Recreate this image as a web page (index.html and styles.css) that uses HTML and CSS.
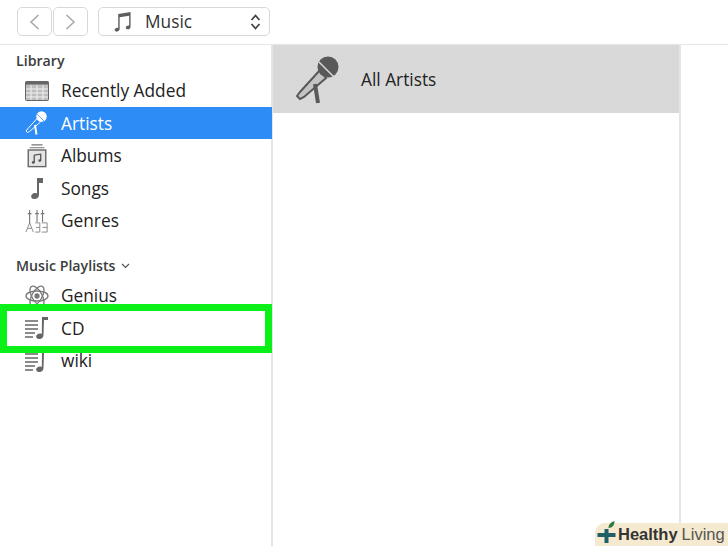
FILE: index.html
```html
<!DOCTYPE html>
<html lang="en">
<head>
    <meta charset="UTF-8">
    <title>Music</title>
    <link rel="stylesheet" href="styles.css">
</head>
<body>
    <svg class="defs" width="0" height="0">
        <symbol id="mic" viewBox="0 0 46 48">
            <path class="mic-body" d="M24 14 L4 36 L1 40 L4 43 L8 41 L30 22 Z"/>
            <path d="M19 28 L22 47" stroke="currentColor" stroke-width="4" fill="none"/>
            <circle cx="32" cy="11" r="10.500" fill="currentColor"/>
            <path class="mic-band" d="M23 6 L38 21"/>
        </symbol>
        <symbol id="note" viewBox="0 0 16 24">
            <path d="M8 2 H14 V7 H10 V19 C10 22 7 23.500 4.500 23 C2 22.500 1.500 20 3 18.500 C4.500 17 6.500 16.800 8 17.500 Z" fill="currentColor"/>
        </symbol>
        <symbol id="playlist" viewBox="0 0 24 24">
            <path d="M0 5 H13 M0 9 H13 M0 13 H13 M0 17 H10 M0 21 H8" stroke="currentColor" stroke-width="1.300" fill="none"/>
            <path d="M17 1 H23 V4 H19 L18.500 19 C18.500 22 16 23.500 13.500 23 C11 22.500 10.500 20 12 18.800 C13.500 17.500 15.500 17.300 16.800 18 Z" fill="currentColor"/>
        </symbol>
    </svg>

    <header class="toolbar">
        <div class="nav-buttons">
            <button class="nav-btn">
                <svg width="11" height="16" viewBox="0 0 11 16"><path d="M9.500 1 L2 8 L9.500 15" fill="none" stroke="#a6a6a6" stroke-width="1.500"/></svg>
            </button>
            <button class="nav-btn">
                <svg width="11" height="16" viewBox="0 0 11 16"><path d="M1.500 1 L9 8 L1.500 15" fill="none" stroke="#a6a6a6" stroke-width="1.500"/></svg>
            </button>
        </div>
        <div class="media-select">
            <svg width="19" height="21" viewBox="0 0 20 22"><path d="M5.500 3 L18.500 1 V16.500 C18.500 18.500 16.500 19.500 15 19.200 C13.200 18.800 13 17 14.200 16 C15 15.300 16 15.100 17 15.300 V5 L7 6.500 V19 C7 20.800 5 22 3.300 21.600 C1.500 21.200 1.200 19.300 2.500 18.300 C3.300 17.600 4.500 17.400 5.500 17.700 Z" fill="#5f5f5f"/></svg>
            <span class="media-label">Music</span>
            <svg class="updown" width="11" height="18" viewBox="0 0 11 18"><path d="M1.500 7 L5.500 2.500 L9.500 7 M1.500 11 L5.500 15.500 L9.500 11" fill="none" stroke="#444" stroke-width="1.800"/></svg>
        </div>
    </header>

    <main class="content">
        <aside class="sidebar">
            <h2 class="section-title">Library</h2>
            <ul class="list">
                <li class="item">
                    <svg class="icon" viewBox="0 0 24 20"><rect x="0.500" y="0.500" width="23" height="19" rx="1" fill="#bdbdbd" stroke="#666"/><rect x="0.500" y="0.500" width="23" height="3" fill="#666"/><path d="M6 4 V19 M12 4 V19 M18 4 V19 M1 8 H23 M1 12 H23 M1 16 H23" stroke="#f2f2f2"/></svg>
                    Recently Added
                </li>
                <li class="item selected">
                    <svg class="icon"><use href="#mic"/></svg>
                    Artists
                </li>
                <li class="item">
                    <svg class="icon" viewBox="0 0 24 26"><path d="M6 1 H18 M4 4 H20" stroke="#777" stroke-width="1.200"/><rect x="2.500" y="6.500" width="19" height="18" fill="#e4e4e4" stroke="#666" stroke-width="1.500"/><path d="M9 12 L16 11 V18 M9 12 V20" stroke="#555" stroke-width="1.400" fill="none"/><circle cx="8" cy="20" r="1.500" fill="#555"/><circle cx="15" cy="18" r="1.500" fill="#555"/></svg>
                    Albums
                </li>
                <li class="item">
                    <svg class="icon"><use href="#note"/></svg>
                    Songs
                </li>
                <li class="item">
                    <svg class="icon" viewBox="0 0 26 26"><path d="M5 1 V16 M13 1 V14 M19 1 V14 M11 5 H15 M17 5 H21 M3 5 H7" stroke="#777" stroke-width="1.200" fill="none"/><path d="M1 25 L5 15 L9 25 M3 21 H7 M11 15 H16 V25 H11 M12 20 H16 M18 15 H24 V25 H18 M19 20 H24" stroke="#888" fill="none"/></svg>
                    Genres
                </li>
            </ul>

            <h2 class="section-title playlists-title">
                Music Playlists
                <svg width="9" height="6" viewBox="0 0 9 6"><path d="M1 1 L4.500 4.500 L8 1" fill="none" stroke="#555" stroke-width="1.200"/></svg>
            </h2>
            <ul class="list">
                <li class="item">
                    <svg class="icon" viewBox="0 0 24 24" fill="none" stroke="#777" stroke-width="1.300"><ellipse cx="12" cy="12" rx="11" ry="5"/><ellipse cx="12" cy="12" rx="11" ry="5" transform="rotate(60 12 12)"/><ellipse cx="12" cy="12" rx="11" ry="5" transform="rotate(120 12 12)"/><circle cx="12" cy="12" r="2" fill="#777"/></svg>
                    Genius
                </li>
                <li class="item">
                    <svg class="icon"><use href="#playlist"/></svg>
                    CD
                </li>
                <li class="item">
                    <svg class="icon"><use href="#playlist"/></svg>
                    wiki
                </li>
            </ul>
            <div class="highlight"></div>
        </aside>

        <section class="artists">
            <div class="artist-row">
                <svg class="artist-icon"><use href="#mic"/></svg>
                <span>All Artists</span>
            </div>
        </section>
    </main>

    <div class="watermark">
        <svg width="23" height="24" viewBox="0 0 22 24"><path d="M9 9 H13 V13 H20 V17 H13 V23 H9 V17 H2 V13 H9 Z" fill="#1f5f66"/><path d="M13 8 C13 4 16 2 19 1 C19 5 17 8 13 8 Z" fill="#2f7a3a"/></svg>
        <span class="wm-bold">Healthy</span><span class="wm-light">Living</span>
    </div>
</body>
</html>
```

FILE: styles.css
```css
* {
    box-sizing: border-box;
}

html, body {
    height: 100%;
}

body {
    margin: 0;
    overflow: hidden;
    position: relative;
    display: flex;
    flex-direction: column;
    background: #fff;
    color: #1c1c1c;
    font-family: "Open Sans", "Noto Sans", sans-serif;
    font-size: 17.300px;
}

.defs {
    position: absolute;
}

.toolbar {
    height: 45px;
    flex: none;
    display: flex;
    align-items: center;
    gap: 10px;
    padding: 0 0 1px 17px;
    border-bottom: 1px solid #e6e6e6;
}

.nav-buttons {
    display: flex;
    gap: 1px;
}

.nav-btn {
    width: 35px;
    height: 29px;
    padding: 0;
    display: flex;
    align-items: center;
    justify-content: center;
    background: #fff;
    border: 1.500px solid #d8d8d8;
    border-radius: 5px;
}

.media-select {
    width: 172px;
    height: 29px;
    display: flex;
    align-items: center;
    padding: 0 8px 0 14px;
    border: 1.500px solid #d8d8d8;
    border-radius: 5px;
    color: #333;
}

.media-label {
    margin-left: 13px;
}

.updown {
    margin-left: auto;
}

.content {
    flex: 1;
    display: flex;
    min-height: 0;
}

.sidebar {
    position: relative;
    width: 273px;
    flex: none;
    padding-top: 7px;
    border-right: 2px solid #e4e4e4;
}

.section-title {
    margin: 0;
    padding-left: 16px;
    font-size: 14.200px;
    font-weight: 600;
    line-height: 18px;
    color: #3c3c3c;
}

.playlists-title {
    margin-top: 20.500px;
    display: flex;
    align-items: center;
    gap: 5px;
}

.list {
    list-style: none;
    margin: 4px 0 0;
    padding: 0;
}

.item {
    height: 32.500px;
    display: flex;
    align-items: center;
    gap: 12px;
    padding: 1px 0 0 25px;
    color: #222;
}

.selected {
    width: 272px;
    background: #2d8cf5;
    color: #fff;
}

.icon {
    width: 24px;
    height: 24px;
    flex: none;
    color: #666;
}

.selected .icon {
    color: #fff;
    --band: #2d8cf5;
    --mic-fill: none;
}

.mic-band {
    stroke: var(--band, #d9d9d9);
    stroke-width: 1.500px;
    fill: none;
}

.mic-body {
    fill: var(--mic-fill, #c4c4c4);
    stroke: currentColor;
    stroke-width: 2px;
}

.highlight {
    position: absolute;
    left: 0;
    top: 259px;
    width: 272px;
    height: 49px;
    border: 7px solid #0cf01a;
}

.artists {
    width: 408px;
    flex: none;
    border-right: 2px solid #e4e4e4;
}

.artist-row {
    height: 68px;
    display: flex;
    align-items: center;
    gap: 19px;
    padding: 1px 0 0 23px;
    background: #d9d9d9;
    color: #222;
}

.artist-icon {
    width: 46px;
    height: 48px;
    color: #595959;
}

.watermark {
    position: absolute;
    right: 0;
    bottom: 0;
    width: 133px;
    height: 23px;
    display: flex;
    align-items: center;
    background: #f5e9cf;
    border-top-left-radius: 10px;
    font-family: "Liberation Sans", sans-serif;
    font-size: 16.500px;
    white-space: nowrap;
}

.watermark svg {
    flex: none;
    margin-top: -6px;
}

.wm-bold {
    font-weight: bold;
    color: #333;
}

.wm-light {
    margin-left: 4px;
    color: #555;
}
```
